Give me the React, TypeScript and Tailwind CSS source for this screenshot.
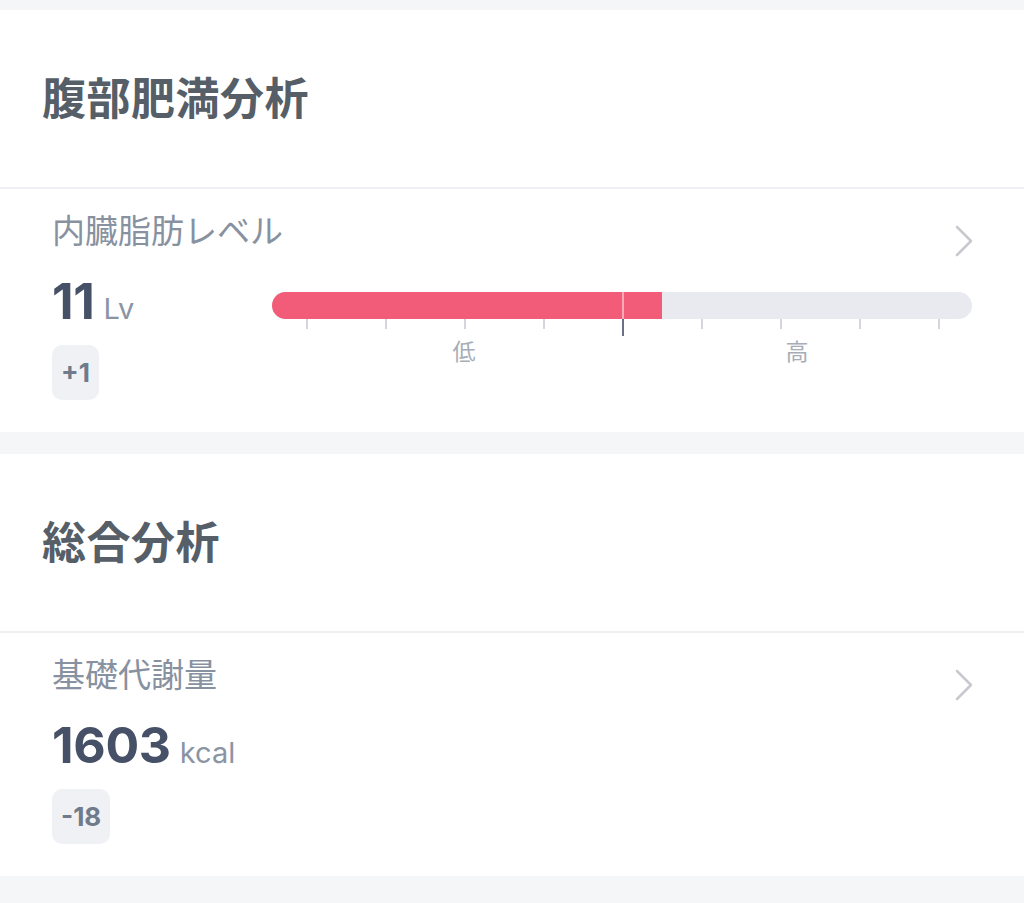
import { ReactNode } from 'react';

const FONT = 'font-["Inter","Noto_Sans_CJK_JP",sans-serif]';

function Chevron() {
  return (
    <svg width="20" height="32" viewBox="0 0 20 32" fill="none" className="mt-[14px] mr-[-2px] shrink-0">
      <path d="M3 2l14 14L3 30" stroke="#c8c9ce" strokeWidth="2.5" strokeLinecap="round" strokeLinejoin="round" />
    </svg>
  );
}

function SectionTitle({ children }: { children: ReactNode }) {
  return (
    <div className="h-[177px] flex items-center pl-[42px] bg-white">
      <h2 className="text-[44px] leading-none font-bold text-[#565e68] tracking-[0.5px]">{children}</h2>
    </div>
  );
}

const ticks = ['left-[34px]', 'left-[113px]', 'left-[192px]', 'left-[271px]', 'left-[429px]', 'left-[508px]', 'left-[587px]', 'left-[666px]'];

function LevelBar() {
  return (
    <div className="flex-1 pt-[19px]">
      <div className="relative h-[27px] rounded-full bg-[#e9eaef] overflow-hidden">
        <div className="absolute left-0 top-0 bottom-0 w-[390px] bg-[#f25c79]" />
        <div className="absolute left-[350px] top-0 bottom-0 w-[2px] bg-[#f8aab8]" />
      </div>
      <div className="relative h-[17px]">
        {ticks.map((t) => (
          <div key={t} className={`absolute top-0 w-[2px] h-[10px] bg-[#d3d6dc] ${t}`} />
        ))}
        <div className="absolute top-0 left-[350px] w-[2px] h-[17px] bg-[#687186]" />
      </div>
      <div className="relative h-[28px] mt-[2px] text-[23px] leading-[28px] text-[#a7adb7]">
        <span className="absolute left-[192px] -translate-x-1/2">低</span>
        <span className="absolute left-[525px] -translate-x-1/2">高</span>
      </div>
    </div>
  );
}

function MetricCard({ label, value, unit, diff, bar }: { label: string; value: string; unit: string; diff: string; bar?: boolean }) {
  return (
    <div className="bg-white border-t-2 border-[#eff0f3] px-[52px] pt-[22px] pb-[32px]">
      <div className="flex justify-between items-start h-[40px]">
        <div className="text-[33px] leading-[40px] text-[#8791a0]">{label}</div>
        <Chevron />
      </div>
      <div className="flex mt-[22px]">
        <div className="w-[220px] shrink-0">
          <div className="flex items-baseline h-[56px]">
            <span className="text-[50px] leading-[56px] font-bold text-[#465167] tracking-[-0.3px]">{value}</span>
            <span className="ml-[9px] text-[29px] leading-none text-[#8a94a4]">{unit}</span>
          </div>
          <div className="mt-[16px] inline-flex items-center h-[55px] px-[9px] rounded-[10px] bg-[#eff1f5] text-[26px] font-bold text-[#6f7a8b]">
            {diff}
          </div>
        </div>
        {bar && <LevelBar />}
      </div>
    </div>
  );
}

export default function App() {
  return (
    <div className={`${FONT} bg-[#f5f6f8] w-[1024px] min-h-[903px]`}>
      <div className="h-[10px]" />
      <SectionTitle>腹部肥満分析</SectionTitle>
      <MetricCard label="内臓脂肪レベル" value="11" unit="Lv" diff="+1" bar />
      <div className="h-[22px]" />
      <SectionTitle>総合分析</SectionTitle>
      <MetricCard label="基礎代謝量" value="1603" unit="kcal" diff="-18" />
    </div>
  );
}
